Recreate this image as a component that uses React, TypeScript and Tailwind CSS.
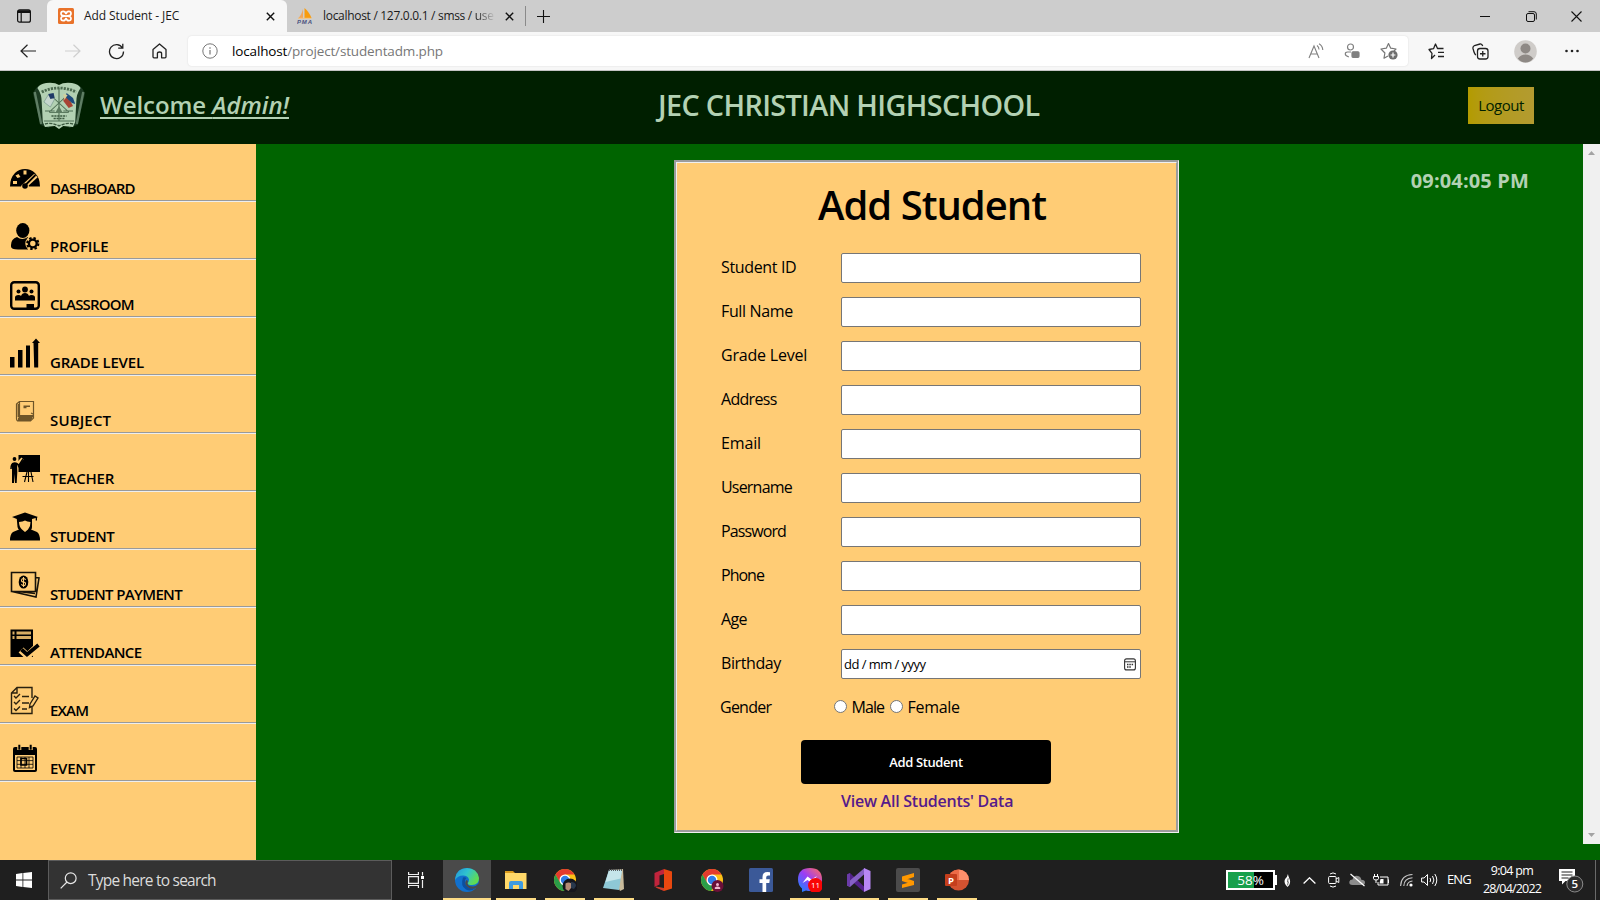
import type { ReactNode } from "react";

/* ---------- browser chrome ---------- */

function TabStrip() {
  return (
    <div className="flex h-8 shrink-0 bg-[#cdcdcd] text-[12px] text-[#1b1b1b]">
      <div className="flex w-[47px] items-center pl-[17px]">
        <svg width="14" height="14" viewBox="0 0 14 14" fill="none" stroke="#111">
          <rect x="0.6" y="0.8" width="12.8" height="12.4" rx="2" strokeWidth="1.2" />
          <path d="M4.200 3v10" strokeWidth="1.2" />
          <path d="M1 2.600h12" strokeWidth="2.800" />
        </svg>
      </div>
      <div className="flex w-60 items-center rounded-t-md bg-[#f7f7f7] pl-[11px]">
        <svg width="16" height="16" viewBox="0 0 16 16">
          <rect width="16" height="16" rx="1.5" fill="#e9722a" />
          <path
            d="M5.200 3.300Q3 3.300 3 5.400T5.200 7.500L8 8l2.800-.500Q13 7.500 13 5.400T10.800 3.300Q8.600 3.300 8 6 7.400 3.300 5.200 3.300zM5.200 12.700Q3 12.700 3 10.600T5.200 8.500L8 8l2.800.500Q13 8.500 13 10.600T10.800 12.700Q8.600 12.700 8 10 7.400 12.700 5.200 12.700z"
            fill="none"
            stroke="#fff"
            strokeWidth="1.700"
          />
        </svg>
        <span className="ml-2.5 w-[182px] whitespace-nowrap tracking-[-0.1px]">Add Student - JEC</span>
        <Cross />
      </div>
      <div className="flex items-center pl-2.5">
        <svg width="16" height="16" viewBox="0 0 16 16">
          <path d="M6 1v9H1.500C3.500 8 5 5 6 1Z" fill="#f2a65a" />
          <path d="M7.500 0C11 3 13 6 14.500 10H7.500Z" fill="#f89c0e" />
          <path d="M1 10.300h13.500" stroke="#f3c27e" />
          <text x="0" y="15.700" fontSize="6" fontWeight="700" fontStyle="italic" fill="#4b5280" fontFamily="Liberation Sans" textLength="15">PMA</text>
        </svg>
        <span className="ml-2.5 w-[182px] whitespace-nowrap tracking-[-0.3px]">
          localhost / 127.0.0.1 / smss /{" "}
          <span className="bg-linear-to-r from-[#1b1b1b] to-[#c2c2c2] bg-clip-text text-transparent">use</span>
        </span>
        <Cross />
        <span className="ml-[11px] h-5 w-px bg-[#8a8a8a]" />
        <svg className="ml-[11px]" width="13" height="13" viewBox="0 0 13 13" stroke="#111" strokeWidth="1.100">
          <path d="M6.500 0v13M0 6.500h13" />
        </svg>
      </div>
      <div className="ml-auto flex items-center pr-[18px]">
        <svg width="10" height="10" viewBox="0 0 10 10" stroke="#111">
          <path d="M0 5.500h10" />
        </svg>
        <svg className="ml-9" width="11" height="11" viewBox="0 0 11 11" fill="none" stroke="#111">
          <rect x="0.500" y="2.500" width="8" height="8" rx="1.500" />
          <path d="M2.500 .7h5.500a2.300 2.300 0 0 1 2.300 2.300v5.500" />
        </svg>
        <svg className="ml-[34px]" width="11" height="11" viewBox="0 0 11 11" stroke="#111" strokeWidth="1.100">
          <path d="M.5 .5l10 10M10.500 .5l-10 10" />
        </svg>
      </div>
    </div>
  );
}

function Cross() {
  return (
    <svg width="9" height="9" viewBox="0 0 9 9" stroke="#111" strokeWidth="1.400">
      <path d="M.8 .8l7.400 7.400M8.200 .8L.8 8.200" />
    </svg>
  );
}

function Toolbar() {
  return (
    <div className="flex h-[39px] shrink-0 items-center border-b border-[#c4c4c4] bg-[#f7f7f7] pl-5 text-[13.500px]">
      <svg width="17" height="14" viewBox="0 0 17 14" fill="none" stroke="#222" strokeWidth="1.200">
        <path d="M7.500 .7L1 7l6.500 6.300M1 7h15" />
      </svg>
      <svg className="ml-[27px]" width="17" height="14" viewBox="0 0 17 14" fill="none" stroke="#cfcfcf" strokeWidth="1.200">
        <path d="M9.500 .7L16 7l-6.500 6.300M16 7H1" />
      </svg>
      <svg className="ml-[27px]" width="17" height="17" viewBox="0 0 17 17" fill="none" stroke="#222" strokeWidth="1.300">
        <path d="M14.500 5A7 7 0 1 0 15.500 8.500M14.800 .8v4.400h-4.600" />
      </svg>
      <svg className="ml-[27px]" width="15" height="16" viewBox="0 0 15 16" fill="none" stroke="#222" strokeWidth="1.300">
        <path d="M1 6.600L7.500 1 14 6.600v7.200q0 1-1 1H9.600v-4.300q0-1.500-2.100-1.500t-2.100 1.500v4.300H2q-1 0-1-1z" strokeLinejoin="round" />
      </svg>
      <div className="ml-[21px] flex h-[30px] w-[1220px] items-center rounded bg-white pl-3.5 shadow-[0_0_2px_rgba(0,0,0,0.12)]">
        <svg width="16" height="16" viewBox="0 0 16 16" fill="none" stroke="#777">
          <circle cx="8" cy="8" r="7.200" />
          <path d="M8 7v4.500M8 4.300v1.500" strokeWidth="1.200" />
        </svg>
        <span className="ml-3.5 whitespace-nowrap tracking-[-0.150px] text-[#777]">
          <span className="text-black">localhost</span>/project/studentadm.php
        </span>
        <svg className="ml-auto" width="17" height="17" viewBox="0 0 17 17" fill="none" stroke="#808080" strokeWidth="1.100">
          <path d="M1 15L6 3l5 12M2.800 11h6.400M9 2.500q2 1.500 2 4M11 .8q3.500 2 3.800 6.200" />
        </svg>
        <svg className="ml-[19px]" width="16" height="16" viewBox="0 0 16 16" fill="none" stroke="#808080" strokeWidth="1.200">
          <circle cx="6.500" cy="4" r="3" />
          <path d="M7 9H3.500Q1.300 9 1.300 11t3.500 2.800" />
          <rect x="8" y="8.800" width="7" height="5.500" rx="1" fill="#808080" />
        </svg>
        <svg className="ml-5 mr-2.5" width="18" height="18" viewBox="0 0 18 18" fill="none" stroke="#777" strokeWidth="1.200">
          <path d="M8 14l-4 2.200.9-5.200L1 7l5.300-.8L8.500 1.500l2.200 4.700L16 7l-2 2" strokeLinejoin="round" />
          <circle cx="13" cy="13" r="4.600" fill="#6e6e6e" stroke="none" />
          <path d="M13 10.600v4.800M10.600 13h4.800" stroke="#fff" />
        </svg>
      </div>
      <svg className="ml-5" width="17" height="17" viewBox="0 0 17 17" fill="none" stroke="#222" strokeWidth="1.300">
        <path d="M7 12l-3.500 3.500.5-5.200L1 6.500l4.500-.8L7.500 1l2 4.500h6M10 9.300h6M10 13.500h6" strokeLinejoin="round" />
      </svg>
      <svg className="ml-[27px]" width="17" height="17" viewBox="0 0 17 17" fill="none" stroke="#222" strokeWidth="1.300">
        <path d="M4 12Q2.500 11.500 1 5.500 .6 3.500 2.500 2.500L8 1q2-.3 2.700 2" />
        <rect x="5.500" y="5.500" width="10.500" height="10.500" rx="2.500" />
        <path d="M10.750 8v5.500M8 10.750h5.500" />
      </svg>
      <svg className="ml-[25px]" width="23" height="23" viewBox="0 0 23 23">
        <circle cx="11.500" cy="11.500" r="11.300" fill="#cfccc9" />
        <circle cx="11.500" cy="8.500" r="5" fill="#8e8985" />
        <path d="M3.800 18.500q3-4 7.700-4t7.700 4q-3 4-7.700 4t-7.700-4" fill="#8e8985" />
      </svg>
      <svg className="ml-7" width="14" height="4" viewBox="0 0 14 4" fill="#222">
        <circle cx="1.500" cy="2" r="1.300" />
        <circle cx="7" cy="2" r="1.300" />
        <circle cx="12.500" cy="2" r="1.300" />
      </svg>
    </div>
  );
}

/* ---------- page header ---------- */

function SchoolCrest() {
  return (
    <svg width="54" height="50" viewBox="0 0 50 50" preserveAspectRatio="none">
      <path d="M7 4Q2 8 1 13l7 31 8 3L12 5zM43 4q5 4 6 9l-7 31-8 3 4-42z" fill="#1c3a22" />
      <path d="M2.500 11l6 32M47.500 11l-6 32" stroke="#5f7e64" strokeWidth="2.200" />
      <path d="M5 7Q7 3 13 2q8-1 12 2 4-3 12-2 6 1 8 5-4 6-4 14l-1 20-2 5-9-1-4 3-4-3-9 1-2-5-1-20Q9 13 5 7z" fill="#b3d1b3" />
      <path d="M9 11q16-8 32 0" fill="none" stroke="#4c6b50" strokeWidth="2.800" strokeDasharray="2 1" />
      <path d="M25 7v33M17 14l17 17M33 14L16 31M12 30h9M29 30h9M11 40h28" stroke="#4f6e54" strokeWidth="1" fill="none" />
      <path d="M16 31h6l3-6 3 6h6v1H16z" fill="#5c7b60" />
      <path d="M18 35h14M20 37.500h10" stroke="#3c5a40" strokeWidth="1.400" strokeDasharray="2 .7" />
      <path d="M12 43q6-2 13 2 7-4 13-2" fill="none" stroke="#3c5a40" strokeWidth="1.400" strokeDasharray="3 1" />
      <path d="M11 21l4-7 6 4-4 8z" fill="#c5d6cd" stroke="#6f9389" strokeWidth=".6" />
      <path d="M15 13l5-1 1 5-4 1z" fill="#1f3a66" />
      <path d="M30 14l5 5 3 6-4 2-5-7z" fill="#a84434" />
      <path d="M32 12l6 5 2 6-3-1-6-6z" fill="#1e4a7c" />
      <path d="M29 13l4 1-3 5z" fill="#d5cf9b" />
    </svg>
  );
}

function PageHeader() {
  return (
    <header className="flex h-[73px] shrink-0 items-start bg-[#001f00] pl-8 font-semibold text-[#b3d1b3]">
      <div className="pt-2.5">
        <SchoolCrest />
      </div>
      <p className="ml-3.5 mt-[18px] w-[558px] whitespace-pre text-[24px] leading-8 tracking-[-0.050px] underline decoration-2 underline-offset-[3px]">
        Welcome <em>Admin!</em>
      </p>
      <h1 className="mt-[13.500px] w-[400px] whitespace-nowrap text-[28.800px] leading-10 tracking-[-0.650px]">JEC CHRISTIAN HIGHSCHOOL</h1>
      <button className="ml-auto mr-[66px] mt-4 h-[37px] w-[66px] bg-linear-to-r from-[#b39b00] to-[#b39b30] text-[15px] font-normal tracking-[-0.500px] text-[#001f00]">
        Logout
      </button>
    </header>
  );
}

/* ---------- sidebar ---------- */

type MenuItem = { label: string; tracking: string; icon: ReactNode };

const menu: MenuItem[] = [
  {
    label: "DASHBOARD",
    tracking: "tracking-[-0.9px]",
    icon: (
      <>
        <path d="M0 22.500Q0 14 5 9 9 5 15 5t10 4q5 5 5 13.500H19l-1-2H12l-1 2z" fill="#000" />
        <path d="M3 17h4v3H3zM5.500 11.500l3-1.500 2 3-3 1zM13.500 6.500h3v4h-3z" fill="#ffcc75" />
        <path d="M14.500 22L26 11.500" stroke="#ffcc75" strokeWidth="5" />
        <path d="M15 21.500L25.500 11" stroke="#000" strokeWidth="1.800" />
        <circle cx="15" cy="22" r="2.800" fill="#000" />
      </>
    ),
  },
  {
    label: "PROFILE",
    tracking: "tracking-[-0.2px]",
    icon: (
      <>
        <ellipse cx="12.800" cy="8.500" rx="6.600" ry="7.500" fill="#000" />
        <path d="M1 23q0-6 6-8 5 4 11 0l1 9-1 3.500H8Q1 27.500 1 24.500z" fill="#000" />
        <circle cx="22.800" cy="21.500" r="7.500" fill="#ffcc75" />
        <circle cx="22.800" cy="21.500" r="5.600" fill="none" stroke="#000" strokeWidth="2" strokeDasharray="2.400 2" />
        <circle cx="22.800" cy="21.500" r="3.900" fill="none" stroke="#000" strokeWidth="2.400" />
      </>
    ),
  },
  {
    label: "CLASSROOM",
    tracking: "tracking-[-0.8px]",
    icon: (
      <>
        <rect x="1.200" y="2.200" width="27.600" height="26.600" rx="3" fill="none" stroke="#000" strokeWidth="2.400" />
        <circle cx="15" cy="9.500" r="2.900" fill="#000" />
        <circle cx="8.500" cy="11.500" r="2" fill="#000" />
        <circle cx="21.500" cy="11.500" r="2" fill="#000" />
        <path d="M5 20.500v-3q0-2.500 3.500-2.500 2 0 2.500 1 1-3 4-3t4 3q.5-1 2.500-1 3.500 0 3.500 2.500v3zM16.500 24H24v4h-7.500z" fill="#000" />
      </>
    ),
  },
  {
    label: "GRADE LEVEL",
    tracking: "tracking-[-0.2px]",
    icon: (
      <path d="M0 19h4.500v10.500H0zM8 12h4.500v17.500H8zM16 7.500h4v22h-4zM23.500 5h-1.500l4-4.500 4 4.500h-1.800v24.500h-4z" fill="#000" />
    ),
  },
  {
    label: "SUBJECT",
    tracking: "tracking-[0.15px]",
    icon: (
      <g fill="none" stroke="#6e5528" strokeWidth="1.200">
        <path d="M9.500 5.500H23.500v14H9.500zM9.500 5.500L6.500 8v14.500q0 2.500 2 2.500h12l3-3v-3" />
        <path d="M8.500 8v13M9 20.500h14.500M8 22.500h14M8 24h13" strokeWidth="1.800" />
        <path d="M13.500 10.300h6.500M13.500 11.600h3" strokeWidth="1.400" />
        <path d="M21 17l2 1" />
      </g>
    ),
  },
  {
    label: "TEACHER",
    tracking: "tracking-[-0.2px]",
    icon: (
      <>
        <path d="M8.500 1H30v17H8.500z" fill="#000" />
        <circle cx="4.500" cy="5" r="2.300" fill="#ffcc75" />
        <circle cx="4.500" cy="5" r="1.900" fill="#000" />
        <path d="M8 9.500l4.500-5" fill="none" stroke="#ffcc75" strokeWidth="3" />
        <path d="M1 15q0-6 3.500-6t4 3l4.500-7" fill="none" stroke="#000" strokeWidth="1.500" />
        <path d="M2 9h5l.3 9-.6 11H5L4.700 20 4 29H2z" fill="#000" />
        <path d="M17 18l-2.500 10M21 18l2 10M18.500 18v10M12.500 22.500h11" stroke="#000" strokeWidth="1.100" />
      </>
    ),
  },
  {
    label: "STUDENT",
    tracking: "tracking-[-0.45px]",
    icon: (
      <>
        <path d="M2 5l13-4.500L28 5l-1 .5v3h-1.300V6L22 7v8q0 2-1 2.500l6 2.500q3 2 3 8.500H0Q0 22 3 20l6-2.500Q8 17 7.500 15L6.800 7z" fill="#000" />
        <path d="M9 10q4-.3 6-1.500 2 1.200 5.500 1.500.2 4.500-2.500 7.500L15 20l-3-2.500Q9 14.500 9 10z" fill="#ffcc75" />
      </>
    ),
  },
  {
    label: "STUDENT PAYMENT",
    tracking: "tracking-[-0.65px]",
    icon: (
      <>
        <path d="M1.500 2.500h24v19h-24zM2 21.500L26 27l3-19-3-.5M8 21.500l17 2" fill="none" stroke="#17130a" strokeWidth="1.600" />
        <ellipse cx="13.500" cy="12" rx="4.800" ry="6.600" fill="#000" />
        <path d="M15.500 10q-.3-1.500-2-1.500t-2 1.700 2 1.800 2 2-2 1.700-2-1.500M13.500 7v10" fill="none" stroke="#ffcc75" strokeWidth="1.100" />
      </>
    ),
  },
  {
    label: "ATTENDANCE",
    tracking: "tracking-[-0.6px]",
    icon: (
      <>
        <path d="M.5 1.500h22.500V29H.5z" fill="#000" />
        <path d="M2.500 3.500h2v3h-2zM6.500 3.500h14.500v3H6.500zM2.500 8h2v3h-2zM6.500 8h14.500v3H6.500z" fill="#ffcc75" opacity=".85" />
        <path d="M11 22l6.500 6L31 15" fill="none" stroke="#ffcc75" strokeWidth="7" />
        <path d="M11.500 21.500l5.500 5L28.500 17" fill="none" stroke="#000" strokeWidth="3.800" />
      </>
    ),
  },
  {
    label: "EXAM",
    tracking: "tracking-[-0.8px]",
    icon: (
      <g fill="none" stroke="#2a210f" strokeWidth="1.400">
        <path d="M22 12V1.500H7L1.500 7v20.500H22V21M7 1.500V7H1.500" />
        <path d="M4 10l2 2 4-4M4 16l2 2 4-4M4 22.500l2 2 4-4M12 10.500h7M12 17h7M12 23h5" />
        <path d="M20 18l5-8 3 2-5 8-3.500 1.500z" />
      </g>
    ),
  },
  {
    label: "EVENT",
    tracking: "tracking-[-0.25px]",
    icon: (
      <>
        <path d="M3 5q0-2 2-2h20q2 0 2 2v21q0 2-2 2H5q-2 0-2-2z" fill="#000" />
        <path d="M5 11h20v15H5z" fill="#ffcc75" />
        <path d="M9.300 1v5M20.700 1v5" stroke="#ffcc75" strokeWidth="4" />
        <path d="M9.300 .8v5M20.700 .8v5" stroke="#000" strokeWidth="2" />
        <path d="M7 13h16v11H7zM7 16.600h16M7 20.300h16M11 13v11M15 13v11M19 13v11" fill="none" stroke="#000" strokeWidth=".8" />
        <path d="M11 14.500h5.500V21H11z" fill="none" stroke="#000" strokeWidth="1.600" />
      </>
    ),
  },
];

function Sidebar() {
  return (
    <nav className="w-64 shrink-0 bg-[#ffcc75]">
      {menu.map((item) => (
        <a key={item.label} className="flex h-[58px] flex-col justify-between">
          <span className="flex pl-2.5 pt-5">
            <svg width="30" height="30" viewBox="0 0 30 30">
              {item.icon}
            </svg>
            <span className={`ml-2.5 mt-3.5 whitespace-nowrap text-[15px] font-semibold leading-5 text-black ${item.tracking}`}>
              {item.label}
            </span>
          </span>
          <span className="-mt-3 h-0.5 border-b border-t border-b-[#eeeeee] border-t-[#9a9a9a]" />
        </a>
      ))}
    </nav>
  );
}

/* ---------- form ---------- */

const fields = [
  { label: "Student ID", tracking: "tracking-[-0.35px]" },
  { label: "Full Name", tracking: "tracking-[-0.35px]" },
  { label: "Grade Level", tracking: "tracking-[-0.2px]" },
  { label: "Address", tracking: "tracking-[-0.7px]" },
  { label: "Email", tracking: "tracking-[-0.15px]" },
  { label: "Username", tracking: "tracking-[-0.8px]" },
  { label: "Password", tracking: "tracking-[-0.9px]" },
  { label: "Phone", tracking: "tracking-[-1px]" },
  { label: "Age", tracking: "tracking-[-0.6px]" },
];

function StudentForm() {
  return (
    <form className="ml-[418px] mt-4 flex h-[673px] w-[505px] flex-col border-[3px] border-[#f0f0f0] bg-[#ffcc75] text-base text-black [border-style:groove]">
      <h2 className="mt-[18px] pl-[141px] text-[40px] font-semibold leading-[48px] tracking-[-1px]">Add Student</h2>
      <div className="mt-6 flex flex-col gap-3.5 pl-11">
        {fields.map((f) => (
          <label key={f.label} className="flex h-[30px]">
            <span className={`w-[120px] whitespace-nowrap leading-[28px] ${f.tracking}`}>{f.label}</span>
            <input className="h-[30px] w-[300px] rounded-[2px] border border-[#767676] bg-white" />
          </label>
        ))}
        <label className="flex h-[30px]">
          <span className="w-[120px] leading-[28px] tracking-[-0.400px]">Birthday</span>
          <span className="flex h-[30px] w-[300px] items-center justify-between rounded-[2px] border border-[#767676] bg-white pl-0.5 pr-1 text-[13px]">
            <span className="mt-0.5 whitespace-nowrap tracking-[-0.550px]">dd / mm / yyyy</span>
            <svg width="12" height="13" viewBox="0 0 12 13" fill="none" stroke="#333">
              <rect x="0.600" y="0.900" width="10.800" height="11" rx="2" strokeWidth="1.100" />
              <path d="M.6 3.800h10.800" />
              <path d="M3 6.500h1.500M5.300 6.500h1.500M7.600 6.500h1.500M3 9h1.500M5.300 9h1.500" strokeWidth="1.400" />
            </svg>
          </span>
        </label>
      </div>
      <div className="mt-[18px] flex h-5 items-center pl-[43px] leading-5">
        <span className="w-[113.500px] tracking-[-0.750px]">Gender</span>
        <Radio />
        <span className="ml-[5px] w-[38px] tracking-[-0.900px]">Male</span>
        <Radio />
        <span className="ml-[5px] tracking-[-0.300px]">Female</span>
      </div>
      <button type="button" className="ml-[124px] mt-[23px] h-11 w-[250px] rounded bg-black pt-px text-[13px] font-semibold tracking-[-0.400px] text-white">
        Add Student
      </button>
      <a className="ml-[164px] mt-[5px] whitespace-nowrap font-semibold leading-6 tracking-[-0.250px] text-[#551a8b]">View All Students' Data</a>
    </form>
  );
}

function Radio() {
  return <span className="mb-0.5 h-[13px] w-[13px] shrink-0 rounded-full border border-[#767676] bg-white" />;
}

function Scrollbar() {
  return (
    <div className="flex h-[700px] w-[17px] flex-col items-center justify-between bg-[#f0f0f0] py-[7px]">
      <svg width="7" height="4" viewBox="0 0 7 4" fill="#a3a3a3">
        <path d="M0 4L3.500 0 7 4z" />
      </svg>
      <svg width="7" height="4" viewBox="0 0 7 4" fill="#a3a3a3">
        <path d="M0 0l3.500 4L7 0z" />
      </svg>
    </div>
  );
}

/* ---------- taskbar ---------- */

function Chrome() {
  return (
    <>
      <circle cx="12" cy="12" r="11" fill="#fbc116" />
      <path d="M2.500 6.500A11 11 0 0 1 21.500 6.500H12L7 15z" fill="#e33b2e" />
      <path d="M2.500 6.500A11 11 0 0 0 11 23l5-8.500H7z" fill="#2a9d48" />
      <circle cx="12" cy="12" r="5.500" fill="#fff" />
      <circle cx="12" cy="12" r="4.200" fill="#2f7de8" />
    </>
  );
}

type TaskApp = { name: string; open?: boolean; active?: boolean; icon: ReactNode };

const apps: TaskApp[] = [
  {
    name: "edge",
    open: true,
    active: true,
    icon: (
      <>
        <defs>
          <linearGradient id="edgeTop" x1="0" y1="0" x2="1" y2="0.500">
            <stop offset="0" stopColor="#2494d8" />
            <stop offset="0.500" stopColor="#2fc3cf" />
            <stop offset="1" stopColor="#60dd50" />
          </linearGradient>
        </defs>
        <circle cx="12" cy="12" r="12" fill="#1170cd" />
        <path d="M.3 10Q2 0 12 0t12 10q0 7-7 7-4.500 0-4.500-2 1.500-1 1.500-3.500Q13 7.500 8 7.500 2.500 7.500.3 12z" fill="url(#edgeTop)" />
        <path d="M8 9.500Q5 18 11 21.500q5 2.500 10.500-2-5 2-8.500-.5-3.500-2.500-3-6.500.4-2 1.500-2.500-1.500-1-3.500-.5z" fill="#0c4f9f" />
        <path d="M12.500 15q0 3.500 5.500 3.500 3 0 5-2.500l2 3v5H19l2.500-4.500q-6 3-10-1.500Q9 15 11.500 12q2 .5 1 3z" fill="#4a4a4a" />
      </>
    ),
  },
  {
    name: "explorer",
    open: true,
    icon: (
      <>
        <path d="M1 3h8l2 2H1z" fill="#d99a1c" />
        <path d="M1 5h21.500v16H1z" fill="#ffd869" />
        <path d="M5 21v-6q0-2 2-2h10q2 0 2 2v6h-4v-4H9v4z" fill="#3f9be0" />
      </>
    ),
  },
  {
    name: "chrome",
    open: true,
    icon: (
      <>
        <Chrome />
        <circle cx="17" cy="18" r="7.500" fill="#15151c" />
        <path d="M12.500 15.500q3-2 6 0v4l-3 3.500-3-2z" fill="#b58b75" />
        <path d="M18 14q5 0 5 4l-2 3-3-1z" fill="#28384c" />
      </>
    ),
  },
  {
    name: "notepad",
    open: true,
    icon: (
      <>
        <path d="M7 2l14-1 1 20-4 2z" fill="#c9bb9b" />
        <path d="M7 2h13l-3 20-16-2z" fill="#8ec8d6" />
        <path d="M7 2h13l-1.300 8.500L3.500 14z" fill="#c5e5ea" />
        <path d="M7 2h13" stroke="#5a5f63" strokeDasharray="1 1" strokeWidth="2" />
      </>
    ),
  },
  {
    name: "office",
    icon: (
      <>
        <path d="M3.500 5L13 1v5l-4.500 1.500v9L3.500 19z" fill="#c0243c" />
        <path d="M13 1l8 2.500v17L13 23z" fill="#e8480f" />
        <path d="M3.500 19L13 20.500V23z" fill="#a1182b" />
        <path d="M5 18.500l8 1.500V23L5 19.500z" fill="#c8402a" />
      </>
    ),
  },
  {
    name: "chrome-guest",
    icon: (
      <>
        <Chrome />
        <circle cx="17.500" cy="18" r="6" fill="#6b1038" />
        <circle cx="17.500" cy="16.500" r="1.500" fill="#f0b8cd" />
        <path d="M14.800 21v-1.500q2.700-2 5.400 0V21z" fill="#f0b8cd" />
      </>
    ),
  },
  {
    name: "facebook",
    icon: (
      <>
        <rect width="24" height="24" rx="1.500" fill="#3b5998" />
        <path d="M13.500 24v-9h-3v-3.700h3V9q0-5 5-5 1.500 0 2.500.2v3.300h-1.800q-2 0-2 1.900v1.900h3.600l-.5 3.700h-3.100v9z" fill="#fff" />
      </>
    ),
  },
  {
    name: "messenger",
    open: true,
    icon: (
      <>
        <defs>
          <linearGradient id="msg" x1="0" y1="1" x2="0.900" y2="0">
            <stop offset="0" stopColor="#0a8dff" />
            <stop offset="0.550" stopColor="#9b3df5" />
            <stop offset="1" stopColor="#ff6b63" />
          </linearGradient>
        </defs>
        <path d="M12 0q12 0 12 11.500T12 23q-2 0-4-.6L4 24v-3.500Q0 17 0 11.500 0 0 12 0z" fill="url(#msg)" />
        <path d="M4.500 15l5-6.500 4 3L19 8l-5.500 7-4-3z" fill="#fff" />
        <circle cx="17.500" cy="17.500" r="7.500" fill="#f90505" />
        <text x="17.500" y="20.400" textAnchor="middle" fontSize="8" fill="#fff" fontFamily="Open Sans">11</text>
      </>
    ),
  },
  {
    name: "visual-studio",
    open: true,
    icon: (
      <>
        <path d="M0 6.500L3 5l14 13.500V24L0 9z" fill="#52218a" />
        <path d="M0 17.500L3 19 17.500 6V0L0 15z" fill="#8661c5" />
        <path d="M0 6.500L3 5v14l-3-1.500z" fill="#6b3ba8" />
        <path d="M17 0l6.500 3v18L17 24z" fill="#b887f5" />
      </>
    ),
  },
  {
    name: "sublime",
    open: true,
    icon: (
      <>
        <rect width="24" height="24" rx="2" fill="#4b4b4b" />
        <path d="M6 8.500L18 5v4L6 13zM6 9l12 4v4L6 13zM6 16.500L18 13v4L6 20z" fill="#ff9800" />
      </>
    ),
  },
  {
    name: "powerpoint",
    open: true,
    icon: (
      <>
        <circle cx="13.500" cy="12" r="10.500" fill="#d35230" />
        <path d="M13.500 1.500A10.500 10.500 0 0 1 24 12H13.500z" fill="#ff8f6b" />
        <path d="M3 12h10.500V1.500A10.500 10.500 0 0 0 3 12z" fill="#ed6c47" />
        <rect x="0" y="6" width="12" height="12" rx="1" fill="#c43e1c" />
        <text x="6" y="15.500" textAnchor="middle" fontSize="9.500" fontWeight="700" fill="#fff" fontFamily="Open Sans">P</text>
      </>
    ),
  },
];

function Taskbar() {
  return (
    <footer className="flex h-10 shrink-0 items-center bg-[#1f1f1f] text-white">
      <div className="flex w-12 justify-center">
        <svg width="16" height="16" viewBox="0 0 16 16" fill="#fff">
          <path d="M0 2l6.500-.9v6.500H0zM7.300 1L16 0v7.600H7.300zM0 8.400h6.500v6.500L0 14zM7.300 8.400H16V16l-8.700-1z" />
        </svg>
      </div>
      <div className="flex h-10 w-[344px] items-center border border-[#5c5c5c] bg-[#333] pl-[11px]">
        <svg width="17" height="17" viewBox="0 0 17 17" fill="none" stroke="#e8e8e8" strokeWidth="1.200">
          <circle cx="10.700" cy="6.200" r="5.400" />
          <path d="M7 10L.7 16.300" />
        </svg>
        <span className="ml-[11px] mt-0.5 whitespace-nowrap text-[15.500px] tracking-[-0.780px] text-[#dcdcdc]">Type here to search</span>
      </div>
      <svg className="ml-4 mr-[19px]" width="16" height="16" viewBox="0 0 16 16" fill="none" stroke="#eee" strokeWidth="1.200">
        <path d="M.6 0v2.500h9.800V0M.6 16v-2.500h9.800V16M.6 4.600h9.800v6.800H.6zM14.500 0v3.500M14.500 8v8" />
        <path d="M13 4h3v3h-3z" fill="#fff" stroke="none" />
      </svg>
      {apps.map((app) => (
        <div
          key={app.name}
          className={`flex h-10 w-12 shrink-0 flex-col items-center justify-between pt-2 not-first:mr-px ${app.active ? "bg-[#4a4a4a]" : ""}`}
        >
          <svg width="24" height="24" viewBox="0 0 24 24">
            {app.icon}
          </svg>
          {app.open && <span className={`h-0.5 bg-[#fddc85] ${app.active ? "w-12" : "w-10"}`} />}
        </div>
      ))}
      <div className="ml-auto flex h-10 items-center">
        <span className="flex h-5 w-[49px] items-center justify-center border-2 border-white bg-linear-to-r from-[#18a04c] from-58% to-black to-58% text-[13.500px]">58%</span>
        <span className="h-2.5 w-0.5 bg-white" />
        <svg className="ml-[7px]" width="7" height="15" viewBox="0 0 8 15" fill="#fff">
          <path d="M4.500 0q-.5 3-3 5.500Q-.5 9 2 12.500L4 15l2-2.500Q8 9 6 5 5 3 4.500 0z" />
          <path d="M4.800 5L4 9h1l-1 4" stroke="#222" fill="none" strokeWidth=".8" />
        </svg>
        <svg className="ml-3" width="13" height="7" viewBox="0 0 13 7" fill="none" stroke="#fff" strokeWidth="1.300">
          <path d="M.6 6.500L6.500 .8l5.900 5.700" />
        </svg>
        <svg className="ml-3" width="12" height="16" viewBox="0 0 12 16" fill="none" stroke="#fff">
          <path d="M2 2q3-2.200 6 0M2 14q3 2.200 6 0" />
          <rect x="0.600" y="4.500" width="7.500" height="7" rx="1" />
          <path d="M8 7l2.800-1.500v5L8 9" />
        </svg>
        <svg className="ml-[9px]" width="17" height="14" viewBox="0 0 17 14">
          <path d="M3.500 12Q0 12 .3 8.800.8 6.500 3.500 6.500 5 2 9 3q3 .8 3.300 3.800Q16 7 16 9.500T13 12z" fill="#8c8c8c" />
          <path d="M1.500 1l14 12" stroke="#fff" strokeWidth="1.200" />
        </svg>
        <svg className="ml-[7px]" width="17" height="13" viewBox="0 0 17 13" fill="none" stroke="#fff">
          <path d="M7 3h8v8H5V8M15.500 5.500v3.500" />
          <path d="M7.500 5h3v4.500h-4z" fill="#fff" stroke="none" />
          <path d="M1.500 0v2.500M4.500 0v2.500M.5 2.500h5v2q0 1.500-2.500 1.500T.5 4.500zM3 6v3" />
        </svg>
        <svg className="ml-2.5" width="13" height="14" viewBox="0 0 13 14" fill="none" stroke="#c8c8c8" strokeWidth="1.100">
          <path d="M.6 13Q1 2 12.500 1.500M3.800 13Q4 5.500 12.500 4.800M7 13Q7.500 8.500 12.500 8" />
          <circle cx="11" cy="12" r="1.600" fill="#fff" stroke="none" />
        </svg>
        <svg className="ml-2" width="17" height="14" viewBox="0 0 17 14" fill="none" stroke="#fff">
          <path d="M.6 5h2.500L6.500 1.500v11L3.100 9H.6zM9 5q1.300 2 0 4M11.500 3q2.800 4 0 8M13.800 1q4 6 0 12" />
        </svg>
        <span className="ml-[9px] w-6 whitespace-nowrap text-[13px] tracking-[-0.900px]">ENG</span>
        <div className="ml-[11px] flex w-[60px] flex-col items-center whitespace-nowrap text-[12.500px] leading-[18px]">
          <span className="tracking-[-0.700px]">9:04 pm</span>
          <span className="tracking-[-0.820px]">28/04/2022</span>
        </div>
        <svg className="ml-[17px] mr-[11px]" width="25" height="26" viewBox="0 0 25 26">
          <path d="M0 2h16v12H6.500L3 17.500V14H0z" fill="#fff" />
          <path d="M2.500 5h11M2.500 8h11M2.500 11h7" stroke="#222" strokeWidth="1.200" />
          <circle cx="15.800" cy="17" r="8" fill="#2c2c2c" stroke="#8a8a8a" />
          <text x="15.800" y="21" textAnchor="middle" fontSize="11.500" fill="#fff" fontWeight="600" fontFamily="Open Sans">5</text>
        </svg>
        <span className="mr-1 h-10 w-px bg-[#6a6a6a]" />
      </div>
    </footer>
  );
}

/* ---------- root ---------- */

export default function App() {
  return (
    <div className="flex h-[900px] w-[1600px] flex-col overflow-hidden font-['Open_Sans',sans-serif]">
      <TabStrip />
      <Toolbar />
      <PageHeader />
      <main className="flex h-[716px] shrink-0 bg-[#006400]">
        <Sidebar />
        <StudentForm />
        <time className="ml-auto mr-[54px] mt-[21px] h-8 whitespace-nowrap text-[20px] font-bold leading-8 tracking-[0.150px] text-[#b3d1b3]">09:04:05 PM</time>
        <Scrollbar />
      </main>
      <Taskbar />
    </div>
  );
}
